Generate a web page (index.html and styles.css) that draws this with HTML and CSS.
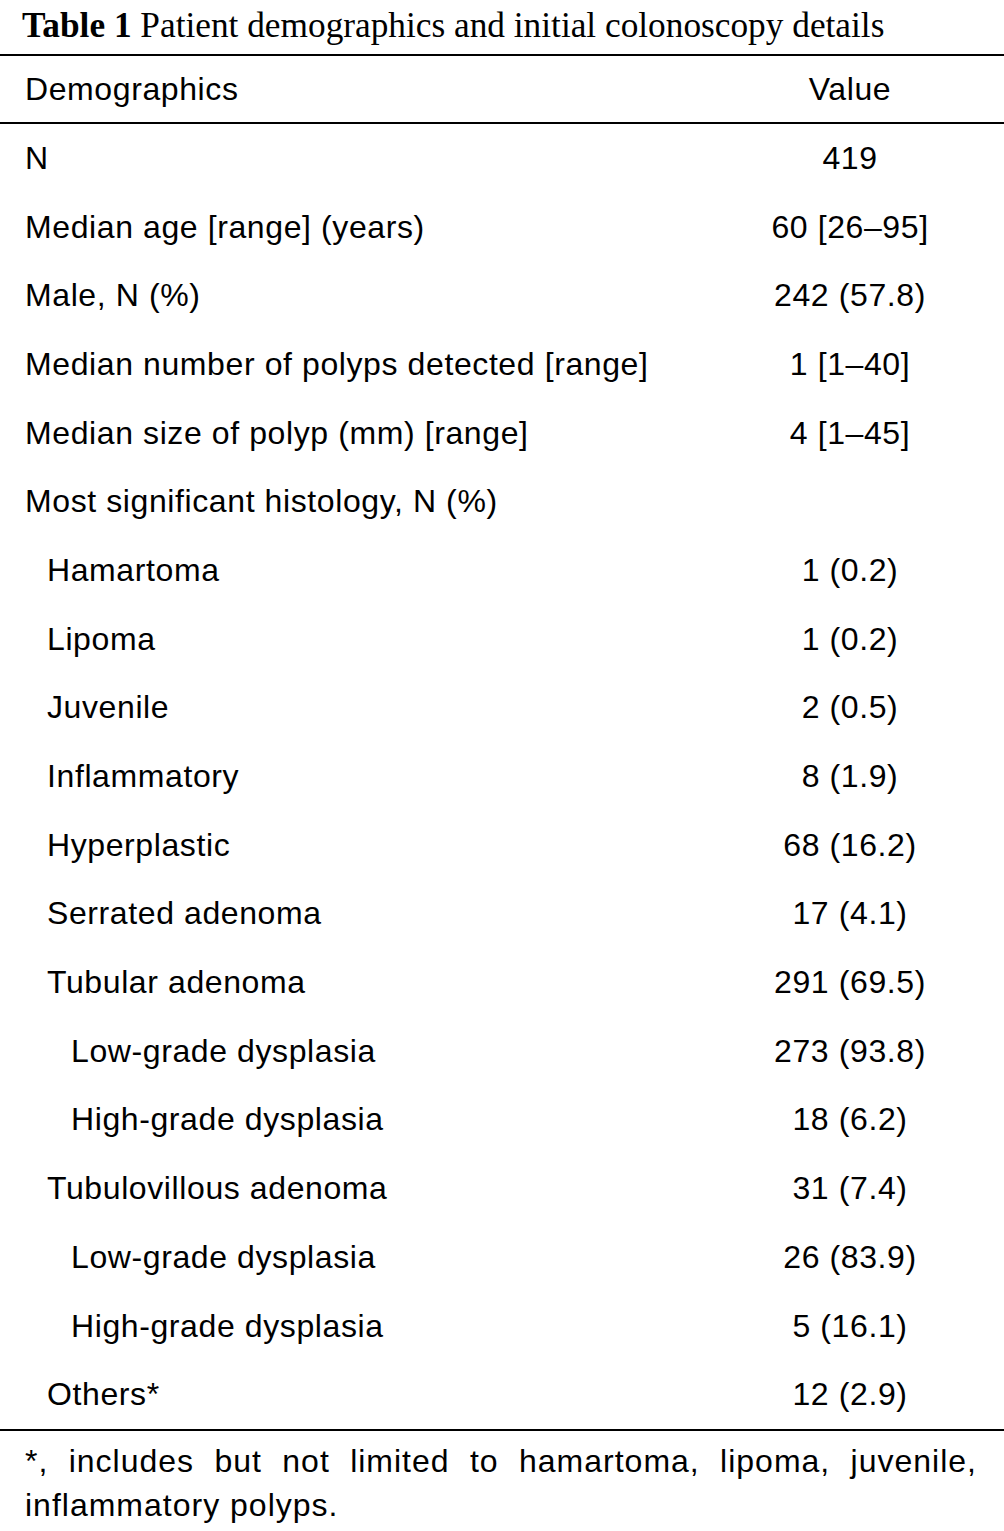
FILE: index.html
```html
<!DOCTYPE html>
<html>
<head>
<meta charset="utf-8">
<link rel="stylesheet" href="styles.css">
</head>
<body>
<div class="page">
  <div class="caption"><b>Table 1</b> Patient demographics and initial colonoscopy details</div>
  <table class="data">
    <thead>
      <tr><th class="label">Demographics</th><th class="value">Value</th></tr>
    </thead>
    <tbody>
      <tr><td class="label">N</td><td class="value">419</td></tr>
      <tr><td class="label">Median age [range] (years)</td><td class="value">60 [26–95]</td></tr>
      <tr><td class="label">Male, N (%)</td><td class="value">242 (57.8)</td></tr>
      <tr><td class="label">Median number of polyps detected [range]</td><td class="value">1 [1–40]</td></tr>
      <tr><td class="label">Median size of polyp (mm) [range]</td><td class="value">4 [1–45]</td></tr>
      <tr><td class="label">Most significant histology, N (%)</td><td class="value"></td></tr>
      <tr><td class="label l1">Hamartoma</td><td class="value">1 (0.2)</td></tr>
      <tr><td class="label l1">Lipoma</td><td class="value">1 (0.2)</td></tr>
      <tr><td class="label l1">Juvenile</td><td class="value">2 (0.5)</td></tr>
      <tr><td class="label l1">Inflammatory</td><td class="value">8 (1.9)</td></tr>
      <tr><td class="label l1">Hyperplastic</td><td class="value">68 (16.2)</td></tr>
      <tr><td class="label l1">Serrated adenoma</td><td class="value">17 (4.1)</td></tr>
      <tr><td class="label l1">Tubular adenoma</td><td class="value">291 (69.5)</td></tr>
      <tr><td class="label l2">Low-grade dysplasia</td><td class="value">273 (93.8)</td></tr>
      <tr><td class="label l2">High-grade dysplasia</td><td class="value">18 (6.2)</td></tr>
      <tr><td class="label l1">Tubulovillous adenoma</td><td class="value">31 (7.4)</td></tr>
      <tr><td class="label l2">Low-grade dysplasia</td><td class="value">26 (83.9)</td></tr>
      <tr><td class="label l2">High-grade dysplasia</td><td class="value">5 (16.1)</td></tr>
      <tr><td class="label l1">Others*</td><td class="value">12 (2.9)</td></tr>
    </tbody>
  </table>
  <p class="note">*, includes but not limited to hamartoma, lipoma, juvenile, inflammatory polyps.</p>
</div>
</body>
</html>
```
FILE: styles.css
```css
html, body {
  margin: 0;
  padding: 0;
  background: #ffffff;
}
.page {
  width: 1004px;
  color: #000;
}
.caption {
  font-family: "Liberation Serif", "Times New Roman", serif;
  font-size: 35.3px;
  line-height: 52px;
  height: 54px;
  padding-left: 22px;
  box-sizing: border-box;
  white-space: nowrap;
}
.caption b {
  font-weight: bold;
}
.data {
  width: 1004px;
  border-collapse: collapse;
  border-top: 2px solid #000;
  border-bottom: 2px solid #000;
  font-family: "Liberation Sans", Arial, sans-serif;
  font-size: 32px;
  letter-spacing: 0.6px;
}
.data th {
  font-weight: normal;
  height: 66px;
  padding: 0;
  border-bottom: 2px solid #000;
}
.data td {
  height: 68.7px;
  padding: 0;
}
.label {
  text-align: left;
  padding-left: 25px !important;
}
.label.l1 { padding-left: 47px !important; }
.label.l2 { padding-left: 71px !important; }
.value {
  width: 308px;
  text-align: center;
}
.note {
  margin: 0;
  padding: 8px 27px 0 25px;
  font-family: "Liberation Sans", Arial, sans-serif;
  font-size: 32px;
  line-height: 44px;
  letter-spacing: 1px;
  text-align: justify;
}
```
